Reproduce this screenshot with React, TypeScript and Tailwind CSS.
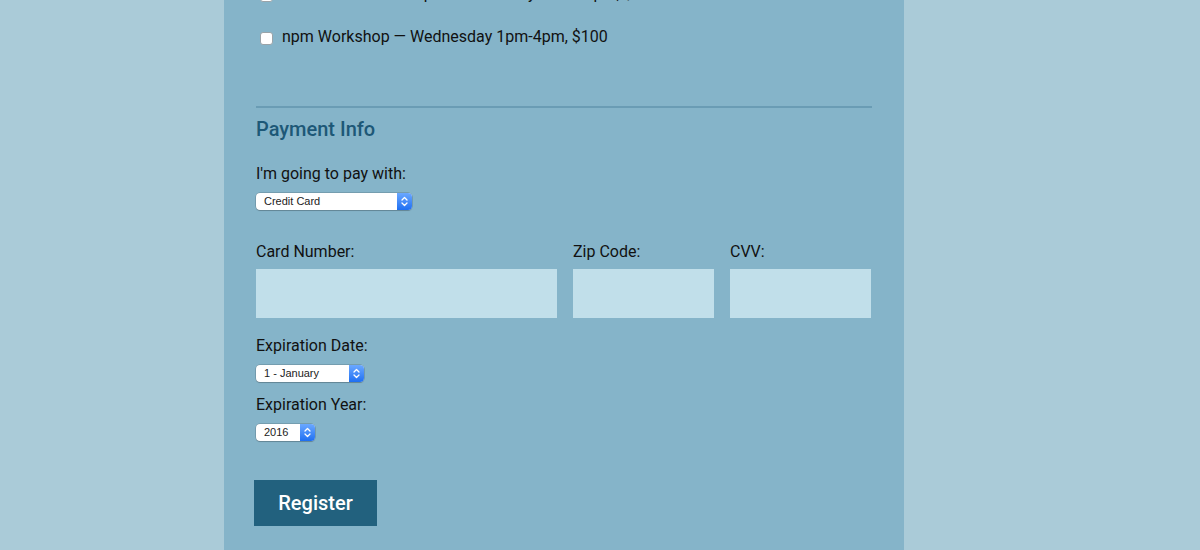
import React from "react";

const activities = [
  "Build tools Workshop — Wednesday 9am-12pm, $100",
  "npm Workshop — Wednesday 1pm-4pm, $100",
];

function Checkbox() {
  return <span className="ml-[4px] block h-[13px] w-[13px] shrink-0 rounded-[3px] border border-[#9aa3a8] bg-white" />;
}

function MacSelect({ value, width }: { value: string; width: string }) {
  return (
    <div
      className={`${width} flex h-[17px] items-stretch overflow-hidden rounded-[4px] bg-white shadow-[0_0_0_0.5px_rgba(0,0,0,0.25),0_1px_1px_rgba(0,0,0,0.15)]`}
    >
      <span className="flex-1 truncate pl-[8px] text-[11px] leading-[17px] text-[#222]" style={{ fontFamily: '"Liberation Sans", Arial, sans-serif' }}>
        {value}
      </span>
      <span className="flex w-[15px] items-center justify-center bg-gradient-to-b from-[#6aa8ff] to-[#1d6ff2]">
        <svg width="7" height="11" viewBox="0 0 7 11" fill="none" stroke="white" strokeWidth="1.3" strokeLinecap="round" strokeLinejoin="round">
          <path d="M1 4 L3.5 1.5 L6 4" />
          <path d="M1 7 L3.5 9.5 L6 7" />
        </svg>
      </span>
    </div>
  );
}

function Label({ children, className = "" }: { children: React.ReactNode; className?: string }) {
  return <label className={`block text-[16px] leading-[20px] text-[#111] ${className}`}>{children}</label>;
}

export default function App() {
  return (
    <div className="flex h-[550px] overflow-hidden bg-[#aacbd8] pl-[224px]" style={{ fontFamily: 'Roboto, "Open Sans", sans-serif' }}>
      <form className="w-[680px] bg-[#85b4c9] px-8">
        {/* ── Activities (tail) ── */}
        <div className="-mt-[11px] flex flex-col gap-[30px]">
          {activities.map((a) => (
            <div key={a} className="flex h-[13px] items-center gap-[9px]">
              <Checkbox />
              <span className="-mt-[3px] whitespace-nowrap text-[16px] leading-[20px] text-[#111]">{a}</span>
            </div>
          ))}
        </div>

        <hr className="mt-[61px] h-[2px] border-0 bg-[#6a9cb4]" />

        {/* ── Payment ── */}
        <h2 className="mt-[9px] text-[20px] font-medium leading-[24px] text-[#1d5877]">Payment Info</h2>

        <Label className="mt-[23px]">I'm going to pay with:</Label>
        <div className="mt-[9px]">
          <MacSelect value="Credit Card" width="w-[156px]" />
        </div>

        <div className="mt-[32px] flex gap-4">
          <div className="w-[301px]">
            <Label>Card Number:</Label>
            <div className="mt-[7px] h-[49px] bg-[#c1dfea]" />
          </div>
          <div className="w-[141px]">
            <Label>Zip Code:</Label>
            <div className="mt-[7px] h-[49px] bg-[#c1dfea]" />
          </div>
          <div className="w-[141px]">
            <Label>CVV:</Label>
            <div className="mt-[7px] h-[49px] bg-[#c1dfea]" />
          </div>
        </div>

        <Label className="mt-[18px]">Expiration Date:</Label>
        <div className="mt-[9px]">
          <MacSelect value="1 - January" width="w-[108px]" />
        </div>

        <Label className="mt-[13px]">Expiration Year:</Label>
        <div className="mt-[9px]">
          <MacSelect value="2016" width="w-[59px]" />
        </div>

        <button type="button" className="-ml-[2px] mt-[39px] h-[46px] w-[123px] bg-[#22617e] text-[20px] font-medium text-white">
          Register
        </button>
      </form>
    </div>
  );
}
